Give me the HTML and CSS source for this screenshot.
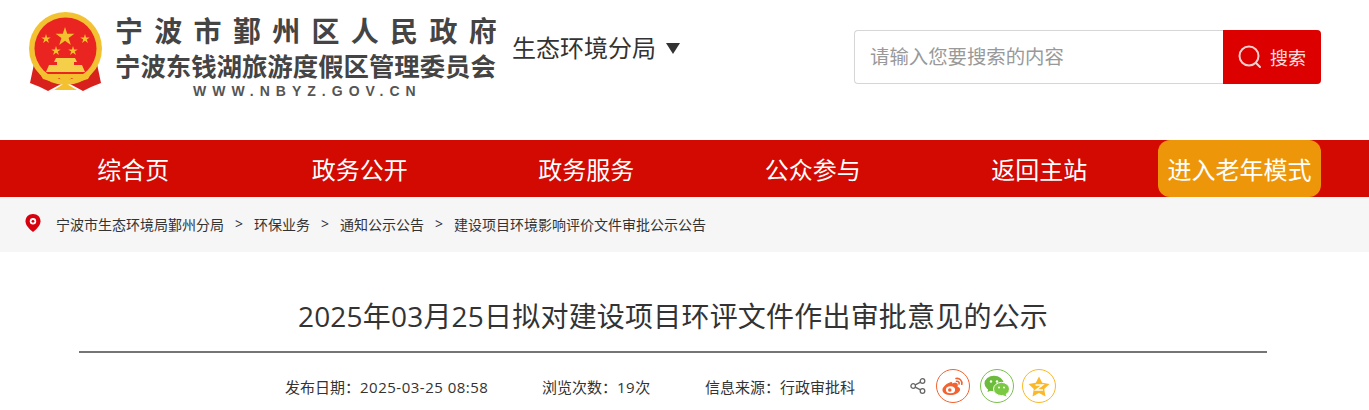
FILE: index.html
```html
<!DOCTYPE html>
<html lang="zh-CN">
<head>
<meta charset="utf-8">
<title>2025年03月25日拟对建设项目环评文件作出审批意见的公示</title>
<link rel="stylesheet" href="styles.css">
</head>
<body>

<div class="top">
	<div class="logo">
		<svg class="emblem" width="75" height="80" viewBox="0 0 75 80">
			<path d="M6 52 L2 71 L12 75 L20 79 L33 72 L42 72 L55 79 L63 75 L73 71 L69 52 Z" fill="#d8201c"/>
			<circle cx="37.5" cy="36.5" r="36.5" fill="#f3c233"/>
			<circle cx="37.5" cy="36.5" r="31" fill="#ea2420"/>
			<polygon points="37,15 39.2,21.8 46.4,21.8 40.6,26 42.8,33 37,28.8 31.2,33 33.4,26 27.6,21.8 34.8,21.8" fill="#f4c02e"/>
			<polygon id="star" points="18,22 19.1,25.4 22.7,25.4 19.8,27.5 20.9,31 18,28.8 15.1,31 16.2,27.5 13.3,25.4 16.9,25.4" fill="#f4c02e"/>
			<use href="#star" x="39"/>
			<use href="#star" x="10" y="12"/>
			<use href="#star" x="27" y="12"/>
			<path d="M26 50 L28 46 L47 46 L49 50 L46 50 L46 53 L54 53 L57 60 L18 60 L21 53 L29 53 L29 50 Z" fill="#f6cf4a"/>
			<path d="M12 62 L63 62 L60 67 L50 70 L44 66 L37 70 L31 66 L25 70 L15 67 Z" fill="#f4c02e"/>
			<path d="M26 78 L37 71 L49 78 Z" fill="#f4c02e"/>
		</svg>
		<div class="logo-text">
			<div class="logo-line1">宁波市鄞州区人民政府</div>
			<div class="logo-line2">宁波东钱湖旅游度假区管理委员会</div>
			<div class="logo-url">WWW.NBYZ.GOV.CN</div>
		</div>
	</div>
	<div class="branch">生态环境分局<span class="branch-arrow"></span></div>
	<div class="search">
		<div class="search-input">请输入您要搜索的内容</div>
		<div class="search-btn">
			<svg width="24" height="24" viewBox="0 0 24 24" fill="none" stroke="#f8d0d0" stroke-width="2">
				<circle cx="11" cy="11" r="9.5"/>
				<path d="M18 18 L22 22" stroke-linecap="round"/>
			</svg>
			<span>搜索</span>
		</div>
	</div>
</div>

<div class="nav">
	<a class="nav-item">综合页</a>
	<a class="nav-item">政务公开</a>
	<a class="nav-item">政务服务</a>
	<a class="nav-item">公众参与</a>
	<a class="nav-item">返回主站</a>
	<a class="nav-old">进入老年模式</a>
</div>

<div class="crumbs">
	<svg class="pin" width="16" height="18" viewBox="0 0 16 18">
		<path d="M8 0 C3.4 0 0.5 3.2 0.5 7.2 C0.5 11.5 5 15.5 8 18 C11 15.5 15.5 11.5 15.5 7.2 C15.5 3.2 12.6 0 8 0 Z" fill="#d7000f"/>
		<circle cx="8" cy="7.3" r="3.2" fill="#fff"/>
		<circle cx="8" cy="7.3" r="1.4" fill="#d7000f"/>
	</svg>
	<span>宁波市生态环境局鄞州分局</span>
	<span class="sep">&gt;</span>
	<span>环保业务</span>
	<span class="sep">&gt;</span>
	<span>通知公示公告</span>
	<span class="sep">&gt;</span>
	<span>建设项目环境影响评价文件审批公示公告</span>
</div>

<div class="article">
	<h1 class="title">2025年03月25日拟对建设项目环评文件作出审批意见的公示</h1>
	<div class="meta">
		<span class="meta-date">发布日期：<span class="meta-num">2025-03-25 08:58</span></span>
		<span class="meta-views">浏览次数：<span class="meta-num">19</span>次</span>
		<span class="meta-from">信息来源：行政审批科</span>
		<svg class="share" width="16" height="16" viewBox="0 0 16 16" fill="none" stroke="#666" stroke-width="1.3">
			<circle cx="3.2" cy="8" r="2.3"/>
			<circle cx="12.5" cy="3" r="2.3"/>
			<circle cx="12.5" cy="13" r="2.3"/>
			<path d="M5.2 6.9 L10.5 4.1 M5.2 9.1 L10.5 11.9"/>
		</svg>
		<span class="round round-weibo">
			<svg width="24" height="22" viewBox="0 0 24 22">
				<path d="M10 7 C5 8.5 1 12.5 1.5 15.5 C2 19 7 20.5 11 20 C16 19.5 19.5 16.5 19 14 C18.7 12.5 17.5 12 16.5 11.7 C17.2 10 17 8.5 15.5 8 C14 7.5 12 8.2 11 8.8 C11.5 7.5 11.3 6.6 10 7 Z" fill="#f4622f"/>
				<ellipse cx="9.5" cy="14.7" rx="4.6" ry="3.5" fill="#fff"/>
				<circle cx="8.8" cy="15" r="1.8" fill="#f4622f"/>
				<path d="M15 3.5 C18.5 2.8 21.5 5.5 20.8 9.3 M15.5 6.3 C17.2 6 18.5 7.2 18.1 8.9" fill="none" stroke="#f4622f" stroke-width="1.6" stroke-linecap="round"/>
			</svg>
		</span>
		<span class="round round-wechat">
			<svg width="26" height="22" viewBox="0 0 26 22">
				<ellipse cx="10" cy="8.5" rx="9.5" ry="7.8" fill="#6cbb3c"/>
				<path d="M4.5 13 L3.5 17 L8.5 15 Z" fill="#6cbb3c"/>
				<ellipse cx="17.5" cy="14" rx="8" ry="6.6" fill="#7ac943" stroke="#fff" stroke-width="1"/>
				<path d="M21.5 18.5 L22.5 21.5 L18 19.8 Z" fill="#7ac943"/>
				<circle cx="7" cy="6.5" r="1.2" fill="#fff"/>
				<circle cx="13" cy="6.5" r="1.2" fill="#fff"/>
				<circle cx="15" cy="12.5" r="1" fill="#fff"/>
				<circle cx="20" cy="12.5" r="1" fill="#fff"/>
			</svg>
		</span>
		<span class="round round-qzone">
			<svg width="22" height="21" viewBox="0 0 22 21">
				<polygon points="11,0.5 14.2,6.8 21.5,7.9 16.2,13 17.5,20.5 11,17 4.5,20.5 5.8,13 0.5,7.9 7.8,6.8" fill="#fbb829"/>
				<path d="M7.5 9 L14.5 9 L8 14 L15 14" fill="none" stroke="#fff" stroke-width="1.5"/>
			</svg>
		</span>
	</div>
</div>

</body>
</html>
```

FILE: styles.css
```css
* {
	box-sizing: border-box;
}

html {
	overflow: hidden;
}

body {
	margin: 0;
	padding: 0;
	background-color: #ffffff;
	color: #333333;
	font-family: "Open Sans", "Noto Sans CJK SC", sans-serif;
}

.top {
	display: flex;
	height: 140px;
	padding-left: 28px;
}

.logo {
	display: flex;
	width: 469px;
	padding-top: 12px;
}

.emblem {
	flex-shrink: 0;
}

.logo-text {
	margin-left: 12px;
	color: #444444;
	font-family: "Noto Sans CJK SC", sans-serif;
	font-weight: 700;
	white-space: nowrap;
}

.logo-line1 {
	height: 36px;
	font-size: 28px;
	line-height: 36px;
	letter-spacing: 11.3px;
}

.logo-line2 {
	height: 34px;
	font-size: 25.4px;
	line-height: 34px;
}

.logo-url {
	padding-left: 78px;
	color: #555555;
	font-family: "Liberation Sans", sans-serif;
	font-size: 14px;
	line-height: 19px;
	letter-spacing: 6px;
}

.branch {
	display: flex;
	align-items: center;
	height: 24px;
	margin-top: 36px;
	margin-left: 15px;
	font-size: 24px;
	line-height: 24px;
	white-space: nowrap;
}

.branch-arrow {
	width: 0;
	height: 0;
	margin-left: 10px;
	border-top: 11px solid #333333;
	border-left: 7px solid transparent;
	border-right: 7px solid transparent;
}

.search {
	display: flex;
	width: 467px;
	height: 54px;
	margin-top: 30px;
	margin-left: auto;
	margin-right: 48px;
}

.search-input {
	flex: 1;
	padding-left: 15px;
	border: 1px solid #d6d6d6;
	border-right: 0;
	border-radius: 4px 0 0 4px;
	color: #999999;
	font-size: 19.4px;
	line-height: 52px;
}

.search-btn {
	display: flex;
	align-items: center;
	width: 98px;
	padding-left: 15px;
	border-radius: 0 4px 4px 0;
	background-color: #dc0000;
	color: #f8e0e0;
	font-size: 18px;
}

.search-btn span {
	margin-left: 8px;
}

.nav {
	display: flex;
	height: 57px;
	padding-left: 20px;
	background-color: #d20a02;
}

.nav-item {
	width: 226.5px;
	color: #ffffff;
	font-size: 24px;
	line-height: 59px;
	text-align: center;
}

.nav-old {
	width: 163px;
	margin-left: 5.5px;
	border-radius: 12px;
	background-color: #ee9609;
	color: #ffffff;
	font-size: 24px;
	line-height: 59px;
	text-align: center;
	white-space: nowrap;
}

.crumbs {
	display: flex;
	align-items: center;
	height: 55px;
	padding-left: 25px;
	padding-bottom: 2px;
	background-color: #f6f6f6;
	color: #333333;
	font-size: 14px;
}

.pin {
	margin-right: 15px;
	margin-top: -1px;
}

.sep {
	margin: 0 11px 0 11px;
}

.article {
	margin: 0 102px 0 79px;
}

.title {
	margin: 0;
	height: 101px;
	padding-top: 44px;
	border-bottom: 2px solid #757575;
	color: #333333;
	font-size: 28px;
	font-weight: 400;
	line-height: 40px;
	letter-spacing: 0.2px;
	text-align: center;
}

.meta {
	display: flex;
	align-items: center;
	height: 66px;
	padding-left: 206px;
	color: #333333;
	font-size: 15px;
	white-space: nowrap;
}

.meta-num {
	letter-spacing: 0.5px;
}

.meta-date {
	width: 257px;
}

.meta-views {
	width: 163px;
}

.meta-from {
	width: 205px;
}

.share {
	margin-right: 10px;
}

.round {
	display: flex;
	align-items: center;
	justify-content: center;
	width: 34px;
	height: 34px;
	border: 1px solid;
	border-radius: 50%;
}

.round-weibo {
	margin-right: 10px;
	border-color: #f4622f;
}

.round-wechat {
	margin-right: 8px;
	border-color: #7cc04f;
}

.round-qzone {
	border-color: #fbb829;
}
```
